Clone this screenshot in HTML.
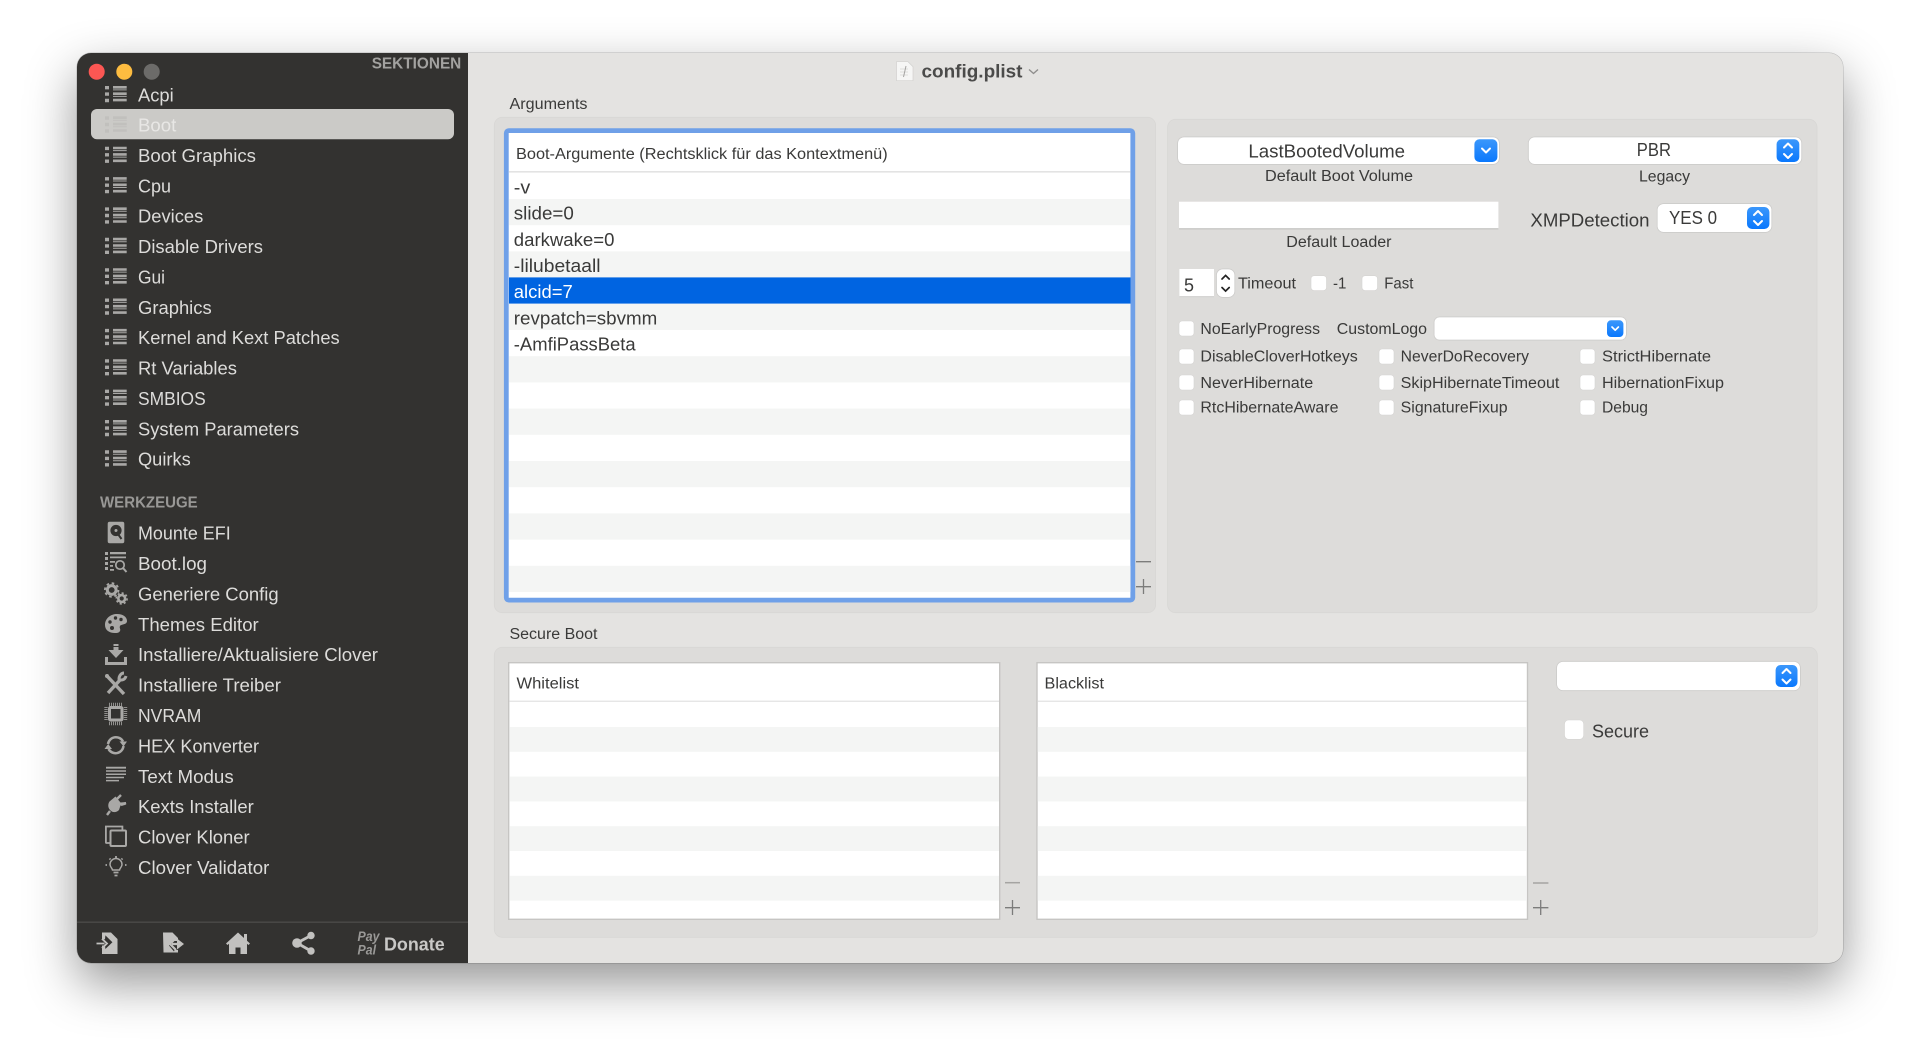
<!DOCTYPE html>
<html lang="de"><head><meta charset="utf-8"><title>config.plist</title>
<style>
html,body{margin:0;padding:0;width:1920px;height:1064px;overflow:hidden;background:#fff}
#win{position:absolute;left:77px;top:52.5px;width:1766px;height:910.5px;border-radius:14px;background:#e4e3e1;box-shadow:0 0 0 .5px rgba(0,0,0,.22),0 20px 50px rgba(0,0,0,.42);overflow:hidden}
#side{position:absolute;left:0;top:0;width:391px;height:100%;background:#333230}
svg{position:absolute;left:0;top:0;filter:blur(.3px)}
text{font-family:"Liberation Sans",sans-serif;fill:#3a3a39;font-size:15.5px}
.s text{fill:#dddcda;font-size:18.5px}
.b{filter:drop-shadow(0 .6px .5px rgba(0,0,0,.3))}
.c{fill:#fff;stroke:#d5d4d2;stroke-width:.6}
.ic{fill:#a9a8a6}
.ln{fill:none;stroke:#a9a8a6}
.g{fill:#f4f5f4}
.ch{fill:none;stroke:#fff;stroke-width:2;stroke-linecap:round;stroke-linejoin:round}
.pm{stroke:#7c7c7b;stroke-width:1.3;fill:none}
</style></head><body>
<div id="win"><div id="side"></div></div>
<svg width="1920" height="1064" viewBox="0 0 1920 1064" xmlns="http://www.w3.org/2000/svg">
<defs>
<linearGradient id="bl" x1="0" y1="0" x2="0" y2="1"><stop offset="0" stop-color="#3b97fb"/><stop offset="1" stop-color="#0a78fd"/></linearGradient>
<g id="li"><path class="ic" d="M0 0h4v3.4H0zM0 6.4h4v3.4H0zM0 12.8h4v3.4H0zM8 0h13.7v2.6H8zM8 3.4h13.7v1H8zM8 6.4h13.7v2.6H8zM8 9.9h13.7v1H8zM8 12.8h13.7v2.6H8z"/></g>
</defs>

<!-- traffic lights -->
<circle cx="96.7" cy="71.7" r="8" fill="#fc5753"/><circle cx="124.3" cy="71.7" r="8" fill="#fdbc40"/><circle cx="151.7" cy="71.7" r="8" fill="#6c6b69"/>

<g class="s" transform="translate(0,-.4)">
<text x="371.7" y="69" textLength="89.6" lengthAdjust="spacingAndGlyphs" style="font-size:15.5px;fill:#a3a2a0;font-weight:700">SEKTIONEN</text>
<rect x="91" y="109.4" width="363" height="30.3" rx="6" fill="#cbcac7"/>
<use href="#li" x="105" y="86.4"/><text x="138" y="101.7" textLength="35.7" lengthAdjust="spacingAndGlyphs">Acpi</text>
<use href="#li" x="105" y="116.8" opacity=".28"/><text x="138" y="132" textLength="38.3" lengthAdjust="spacingAndGlyphs" style="fill:#e8e7e5">Boot</text>
<use href="#li" x="105" y="147.1"/><text x="138" y="162.4" textLength="118" lengthAdjust="spacingAndGlyphs">Boot Graphics</text>
<use href="#li" x="105" y="177.5"/><text x="138" y="192.8" textLength="33" lengthAdjust="spacingAndGlyphs">Cpu</text>
<use href="#li" x="105" y="207.8"/><text x="138" y="223.1" textLength="65.3" lengthAdjust="spacingAndGlyphs">Devices</text>
<use href="#li" x="105" y="238.2"/><text x="138" y="253.5" textLength="125" lengthAdjust="spacingAndGlyphs">Disable Drivers</text>
<use href="#li" x="105" y="268.6"/><text x="138" y="283.9" textLength="27" lengthAdjust="spacingAndGlyphs">Gui</text>
<use href="#li" x="105" y="298.9"/><text x="138" y="314.2" textLength="73.7" lengthAdjust="spacingAndGlyphs">Graphics</text>
<use href="#li" x="105" y="329.3"/><text x="138" y="344.6" textLength="201.7" lengthAdjust="spacingAndGlyphs">Kernel and Kext Patches</text>
<use href="#li" x="105" y="359.6"/><text x="138" y="375" textLength="99" lengthAdjust="spacingAndGlyphs">Rt Variables</text>
<use href="#li" x="105" y="390"/><text x="138" y="405.3" textLength="67.7" lengthAdjust="spacingAndGlyphs">SMBIOS</text>
<use href="#li" x="105" y="420.4"/><text x="138" y="435.7" textLength="161" lengthAdjust="spacingAndGlyphs">System Parameters</text>
<use href="#li" x="105" y="450.7"/><text x="138" y="466" textLength="52.7" lengthAdjust="spacingAndGlyphs">Quirks</text>
<text x="100" y="507.8" textLength="97.7" lengthAdjust="spacingAndGlyphs" style="font-size:15.5px;fill:#999896;font-weight:700">WERKZEUGE</text>

<text x="138" y="540" textLength="92.7" lengthAdjust="spacingAndGlyphs">Mounte EFI</text>
<text x="138" y="570.4" textLength="69" lengthAdjust="spacingAndGlyphs">Boot.log</text>
<text x="138" y="600.8" textLength="140.7" lengthAdjust="spacingAndGlyphs">Generiere Config</text>
<text x="138" y="631.2" textLength="120.7" lengthAdjust="spacingAndGlyphs">Themes Editor</text>
<text x="138" y="661.6" textLength="240" lengthAdjust="spacingAndGlyphs">Installiere/Aktualisiere Clover</text>
<text x="138" y="692" textLength="143" lengthAdjust="spacingAndGlyphs">Installiere Treiber</text>
<text x="138" y="722.4" textLength="63.3" lengthAdjust="spacingAndGlyphs">NVRAM</text>
<text x="138" y="752.8" textLength="121" lengthAdjust="spacingAndGlyphs">HEX Konverter</text>
<text x="138" y="783.2" textLength="95.7" lengthAdjust="spacingAndGlyphs">Text Modus</text>
<text x="138" y="813.6" textLength="115.7" lengthAdjust="spacingAndGlyphs">Kexts Installer</text>
<text x="138" y="844" textLength="111.7" lengthAdjust="spacingAndGlyphs">Clover Kloner</text>
<text x="138" y="874.4" textLength="131.3" lengthAdjust="spacingAndGlyphs">Clover Validator</text>
</g>

<!-- tool icons -->
<rect x="107.7" y="521.7" width="16.6" height="21.6" rx="2" class="ic"/>
<circle cx="116" cy="530.5" r="5.6" fill="#333230"/><circle cx="116" cy="530.5" r="1.5" class="ic"/><path d="M116.5 532l5 7" stroke="#333230" stroke-width="2" fill="none"/>

<path class="ic" d="M105 552h3v3h-3zM105 557h3v3h-3zM105 562h3v3h-3zM105 567h3v3h-3zM110 552h16v2.2h-16zM110 556.5h16v1.8h-16zM110 561h5v1.8h-5zM110 565h3v1.8h-3zM110 569h4v1.8h-4z"/>
<circle cx="120" cy="565" r="4.2" class="ln" stroke-width="1.7"/><path class="ln" stroke-width="2" d="M123 568l3.5 4"/>

<circle cx="111.7" cy="590" r="4.4" class="ln" stroke-width="3"/><circle cx="111.7" cy="590" r="6.8" fill="none" stroke="#a9a8a6" stroke-width="1.8" stroke-dasharray="2.6 2.7"/>
<circle cx="121.7" cy="598.5" r="3.4" class="ln" stroke-width="2.6"/><circle cx="121.7" cy="598.5" r="5.4" fill="none" stroke="#a9a8a6" stroke-width="1.6" stroke-dasharray="2.1 2.1"/>

<path class="ic" d="M105 625c0-7 6-11 12-11 6 0 10 3 10 7 0 4-6 3-7 5-1 2 1 3 0 5-1 2-3 2-5 2-6 0-10-3-10-8z"/>
<circle cx="110" cy="622" r="1.7" fill="#333230"/><circle cx="115.5" cy="618" r="1.7" fill="#333230"/><circle cx="121" cy="619.5" r="1.7" fill="#333230"/><circle cx="112" cy="628" r="2" fill="#333230"/>

<path class="ic" d="M113.5 644h5v2h-5zM113.5 647h5v3h5l-7.5 8-7.5-8h5z"/><path class="ic" d="M105 657h3v5h16v-5h3v8H105z"/>

<path class="ln" stroke-width="3.4" d="M107 676l17 18"/><path class="ln" stroke-width="3.4" d="M108 693l12-13"/>
<path class="ln" stroke-width="3" d="M126 676c-1 4-5 5-7 3 0-3 2-6 5-6"/><circle cx="107" cy="676" r="2" class="ic"/>

<rect x="109.500" y="707.500" width="12.500" height="12.500" rx="1" class="ln" stroke-width="3"/>
<path fill="none" stroke="#a9a8a6" stroke-width="3.400" stroke-dasharray="1 1" d="M106 707v14M125.500 707v14M109 704.500h14M109 723.500h14" opacity=".8"/>

<path class="ln" stroke-width="2.500" d="M108 744A8 8 0 0 1 123 741.500M123.500 746A8 8 0 0 1 108.500 749"/>
<path class="ic" d="M119.500 741.500h7.500l-3.500 5zM104.500 749h7.500l-3.800-5z"/>

<path class="ic" d="M106 766.700h20v1.900h-20zM106 770.300h20v1.500h-20zM106 773.500h20v1.500h-20zM106 776.700h18v1.500h-18zM106 779.900h13v1.500h-13z" />

<path class="ic" d="M109.500 801.500l6-5 5 6-.0 0 5.500-.5-.5 3-5 .5-1.500 4.500c-3 3-6.500 2.500-8.500.5-2.500-2.500-3-6-1-9z"/>
<path class="ln" stroke-width="2.400" d="M116 800l5-5M107 815l3-4M121 805l5-2"/>

<path class="ln" stroke-width="1.800" d="M110 843h-3.500a.6.6 0 0 1-.6-.6V826.500h16.500v3.500"/>
<rect x="110.500" y="830.500" width="15.500" height="15.500" rx="1" class="ln" stroke-width="2"/>

<path class="ln" stroke-width="1.500" d="M112.500 870c-.3-2-2.500-3-2.500-5.500a6 6 0 0 1 12 0c0 2.500-2.200 3.500-2.500 5.500z"/>
<path class="ln" stroke-width="1.800" d="M113.500 872.500h5M114.500 875.500h3M116 856v2M107 865h-1.500M126.500 865H125M109.500 858.500l1 1M122.500 858.500l-1 1"/>

<!-- footer -->
<rect x="77" y="921.500" width="391" height="1.400" fill="#4b4a48"/>
<path style="fill:#c2c1bf" d="M102 932.500h9l6.500 6.500v15h-15.500v-8.500h3l.4 3.500 7-6.800-7-6.800-.4 3.800h-3z"/>
<path d="M96.500 943.500h8M102 938.800l5 4.700-5 4.700" fill="none" stroke="#c2c1bf" stroke-width="1.800"/>
<path style="fill:#c2c1bf" d="M163 932.500h9.500l5.500 5.500v3h-3.500l-.5-1.500-5 6 5 6 .5-1.500h3.500v2.500h-14.500z"/>
<path fill="none" stroke="#c2c1bf" stroke-width="2.200" d="M176 938l-6 6 6 6M172 944h6"/><path style="fill:#c2c1bf" d="M177 938.500l7 5.500-7 5.500z"/>
<path style="fill:#c2c1bf" d="M238 932.500l6 5.500v-4h3v6.800l3 2.700-1.500 1.500-1.500-1.200v10.200h-6.500v-6.500h-5v6.500h-6.500v-10.200l-1.500 1.200-1.500-1.500z"/>
<circle cx="297" cy="943" r="4.800" fill="#c2c1bf"/><circle cx="311" cy="935.500" r="3.700" fill="#c2c1bf"/><circle cx="311" cy="951" r="3.700" fill="#c2c1bf"/>
<path d="M297 943l14-7.500M297 943l14 8" stroke="#c2c1bf" stroke-width="2.800" fill="none"/>
<text x="357.500" y="941" textLength="22" lengthAdjust="spacingAndGlyphs" style="font-size:13.500px;font-style:italic;font-weight:700;fill:#9a9997">Pay</text>
<text x="357.500" y="954.500" textLength="18.500" lengthAdjust="spacingAndGlyphs" style="font-size:13.500px;font-style:italic;font-weight:700;fill:#9a9997">Pal</text>
<text x="384" y="950.700" textLength="60.700" lengthAdjust="spacingAndGlyphs" style="font-size:18px;font-weight:700;fill:#c9c8c6">Donate</text>

<!-- title -->
<path d="M896.500 61.700h11.500l5 5v14h-16.500z" fill="#f6f6f5" stroke="#d2d1cf" stroke-width=".7"/>
<path d="M900 69h8M900 72h8M900 75h8" stroke="#d6d5d3" stroke-width=".7" fill="none"/><path d="M906 66l-2.500 11" stroke="#a5a4a2" stroke-width="1" fill="none"/>
<text x="921.500" y="77.300" textLength="101" lengthAdjust="spacingAndGlyphs" style="font-size:18px;font-weight:700;fill:#4b4b4a">config.plist</text>
<path d="M1029 69.500l4.500 4 4.500-4" fill="none" stroke="#8f8e8d" stroke-width="1.400"/>

<!-- Arguments -->
<text x="509.500" y="109" textLength="78" lengthAdjust="spacingAndGlyphs">Arguments</text>
<rect x="494.300" y="117.300" width="661.300" height="495.400" rx="8" fill="#dddcda" stroke="#d8d7d5" stroke-width=".8"/>
<rect x="506.300" y="130.600" width="626.500" height="469.500" rx="2.500" fill="#fff" stroke="#6fa0e8" stroke-width="4.800"/>
<rect x="509" y="171" width="621.500" height="1.600" fill="#e3e3e3"/>
<text x="516" y="158.800" textLength="371.700" lengthAdjust="spacingAndGlyphs">Boot-Argumente (Rechtsklick für das Kontextmenü)</text>
<g>
<rect class="g" x="509" y="199" width="621.500" height="26.200"/><rect class="g" x="509" y="251.400" width="621.500" height="26.200"/>
<rect class="g" x="509" y="303.800" width="621.500" height="26.200"/><rect class="g" x="509" y="356.200" width="621.500" height="26.200"/>
<rect class="g" x="509" y="408.600" width="621.500" height="26.200"/><rect class="g" x="509" y="461" width="621.500" height="26.200"/>
<rect class="g" x="509" y="513.400" width="621.500" height="26.200"/><rect class="g" x="509" y="565.800" width="621.500" height="26.200"/>
<rect x="509" y="277.400" width="621.500" height="26.200" fill="#0064e1"/>
</g>
<g>
<text x="513.800" y="193.300" textLength="16.500" lengthAdjust="spacingAndGlyphs" style="font-size:18.500px">-v</text>
<text x="513.800" y="219.700" textLength="60" lengthAdjust="spacingAndGlyphs" style="font-size:18.500px">slide=0</text>
<text x="513.800" y="245.800" textLength="100.600" lengthAdjust="spacingAndGlyphs" style="font-size:18.500px">darkwake=0</text>
<text x="513.800" y="271.800" textLength="86.700" lengthAdjust="spacingAndGlyphs" style="font-size:18.500px">-lilubetaall</text>
<text x="513.800" y="298" textLength="59" lengthAdjust="spacingAndGlyphs" style="font-size:18.500px;fill:#fff">alcid=7</text>
<text x="513.800" y="324.300" textLength="143.500" lengthAdjust="spacingAndGlyphs" style="font-size:18.500px">revpatch=sbvmm</text>
<text x="513.800" y="350.700" textLength="121.900" lengthAdjust="spacingAndGlyphs" style="font-size:18.500px">-AmfiPassBeta</text>
</g>
<path class="pm" d="M1136 561.700h15M1136 586.700h15M1143.500 579v15"/>

<!-- right panel -->
<rect x="1167.600" y="119.300" width="649.400" height="493.400" rx="8" fill="#dddcda" stroke="#d8d7d5" stroke-width=".8"/>
<rect class="b" x="1178" y="137.300" width="321" height="26.700" rx="6" fill="#fff"/>
<rect x="1474.400" y="139.300" width="23" height="22.700" rx="5" fill="url(#bl)"/>
<path class="ch" d="M1482 148.500l4 4 4-4"/>
<text x="1248.400" y="157.700" textLength="156.600" lengthAdjust="spacingAndGlyphs" style="font-size:18px">LastBootedVolume</text>
<text x="1265" y="181" textLength="148" lengthAdjust="spacingAndGlyphs">Default Boot Volume</text>

<rect class="b" x="1528.700" y="137.300" width="272.700" height="26.700" rx="6" fill="#fff"/>
<rect x="1776.600" y="139.300" width="22.700" height="22.700" rx="5" fill="url(#bl)"/>
<path class="ch" d="M1784 147.500l4-4 4 4M1784 154l4 4 4-4"/>
<text x="1636.800" y="156" textLength="34.200" lengthAdjust="spacingAndGlyphs" style="font-size:18px">PBR</text>
<text x="1639" y="181.500" textLength="51" lengthAdjust="spacingAndGlyphs">Legacy</text>

<rect x="1179" y="201.700" width="319.400" height="27" fill="#fff"/><rect x="1179" y="228.300" width="319.400" height="1" fill="#b9b8b6"/>
<text x="1286.300" y="247" textLength="105.200" lengthAdjust="spacingAndGlyphs">Default Loader</text>

<text x="1530.400" y="226.700" textLength="119.100" lengthAdjust="spacingAndGlyphs" style="font-size:18.500px">XMPDetection</text>
<rect class="b" x="1657.500" y="204" width="114" height="28" rx="6" fill="#fff"/>
<rect x="1747" y="207" width="22.400" height="22" rx="5" fill="url(#bl)"/>
<path class="ch" d="M1754 215l4-4 4 4M1754 221l4 4 4-4"/>
<text x="1669" y="224" textLength="48" lengthAdjust="spacingAndGlyphs" style="font-size:18px">YES 0</text>

<rect x="1179.400" y="269" width="34.600" height="28" fill="#fff"/><rect x="1179.400" y="296.300" width="34.600" height=".8" fill="#c4c3c1"/>
<text x="1184" y="291.300" textLength="10" lengthAdjust="spacingAndGlyphs" style="font-size:18px">5</text>
<rect class="b" x="1216.800" y="269.300" width="17.700" height="27.700" rx="6" fill="#fff"/>
<path d="M1222 279l3.600-3.600 3.600 3.600M1222 287.500l3.600 3.600 3.600-3.600" fill="none" stroke="#222" stroke-width="1.700" stroke-linecap="round"/>
<text x="1238" y="288.700" textLength="58" lengthAdjust="spacingAndGlyphs" style="font-size:16px">Timeout</text>
<rect class="c" x="1311" y="275.700" width="15.500" height="14.800" rx="3"/>
<text x="1333" y="288.700" textLength="13.400" lengthAdjust="spacingAndGlyphs" style="font-size:16px">-1</text>
<rect class="c" x="1362" y="275.700" width="15.500" height="14.800" rx="3"/>
<text x="1384.300" y="288.700" textLength="29.100" lengthAdjust="spacingAndGlyphs" style="font-size:16px">Fast</text>

<rect class="c" x="1179" y="321" width="15" height="15" rx="3"/>
<text x="1200.400" y="334" textLength="119.600" lengthAdjust="spacingAndGlyphs">NoEarlyProgress</text>
<text x="1336.800" y="334" textLength="90.200" lengthAdjust="spacingAndGlyphs">CustomLogo</text>
<rect class="b" x="1434.400" y="317.300" width="191.600" height="22.400" rx="5" fill="#fff"/>
<rect x="1607" y="320.300" width="16.400" height="16.700" rx="4" fill="url(#bl)"/>
<path class="ch" style="stroke-width:1.700" d="M1612 327l3.200 3.200 3.200-3.200"/>

<rect class="c" x="1179" y="349" width="15" height="15" rx="3"/><text x="1200.400" y="361.700" textLength="157.400" lengthAdjust="spacingAndGlyphs">DisableCloverHotkeys</text>
<rect class="c" x="1379" y="349" width="15" height="15" rx="3"/><text x="1400.700" y="361.700" textLength="128.300" lengthAdjust="spacingAndGlyphs">NeverDoRecovery</text>
<rect class="c" x="1580" y="349" width="15" height="15" rx="3"/><text x="1602" y="361.700" textLength="109" lengthAdjust="spacingAndGlyphs">StrictHibernate</text>
<rect class="c" x="1179" y="375" width="15" height="15" rx="3"/><text x="1200.400" y="388" textLength="112.800" lengthAdjust="spacingAndGlyphs">NeverHibernate</text>
<rect class="c" x="1379" y="375" width="15" height="15" rx="3"/><text x="1400.700" y="388" textLength="158.700" lengthAdjust="spacingAndGlyphs">SkipHibernateTimeout</text>
<rect class="c" x="1580" y="375" width="15" height="15" rx="3"/><text x="1602" y="388" textLength="122" lengthAdjust="spacingAndGlyphs">HibernationFixup</text>
<rect class="c" x="1179" y="400" width="15" height="15" rx="3"/><text x="1200.400" y="412.700" textLength="138.100" lengthAdjust="spacingAndGlyphs">RtcHibernateAware</text>
<rect class="c" x="1379" y="400" width="15" height="15" rx="3"/><text x="1400.700" y="412.700" textLength="106.900" lengthAdjust="spacingAndGlyphs">SignatureFixup</text>
<rect class="c" x="1580" y="400" width="15" height="15" rx="3"/><text x="1602" y="412.700" textLength="46" lengthAdjust="spacingAndGlyphs">Debug</text>

<!-- Secure Boot -->
<text x="509.500" y="639" textLength="88" lengthAdjust="spacingAndGlyphs">Secure Boot</text>
<rect x="494.300" y="647.300" width="1323" height="290" rx="8" fill="#dddcda" stroke="#d8d7d5" stroke-width=".8"/>

<rect x="508.700" y="662.700" width="491" height="256.600" fill="#fff" stroke="#c6c5c3" stroke-width="1.400"/>
<rect x="509.400" y="700.600" width="489.600" height="1.300" fill="#e3e3e3"/>
<rect class="g" x="509.400" y="727" width="489.600" height="24.800"/><rect class="g" x="509.400" y="776.600" width="489.600" height="24.800"/>
<rect class="g" x="509.400" y="826.200" width="489.600" height="24.800"/><rect class="g" x="509.400" y="875.800" width="489.600" height="24.800"/>
<text x="516.500" y="688.300" textLength="62.500" lengthAdjust="spacingAndGlyphs">Whitelist</text>
<path d="M1005 882.700h15" stroke="#a5a4a2" stroke-width="1.500"/><path class="pm" d="M1005 907.700h15M1012.500 900v15"/>

<rect x="1037" y="662.700" width="490.500" height="256.600" fill="#fff" stroke="#c6c5c3" stroke-width="1.400"/>
<rect x="1037.700" y="700.600" width="489.100" height="1.300" fill="#e3e3e3"/>
<rect class="g" x="1037.700" y="727" width="489.100" height="24.800"/><rect class="g" x="1037.700" y="776.600" width="489.100" height="24.800"/>
<rect class="g" x="1037.700" y="826.200" width="489.100" height="24.800"/><rect class="g" x="1037.700" y="875.800" width="489.100" height="24.800"/>
<text x="1044.500" y="688.300" textLength="59.500" lengthAdjust="spacingAndGlyphs">Blacklist</text>
<path d="M1533 883h15.400" stroke="#a5a4a2" stroke-width="1.500"/><path class="pm" d="M1533 907.700h15.400M1540.700 900v15"/>

<rect class="b" x="1557" y="661.700" width="243" height="28.600" rx="6" fill="#fff"/>
<rect x="1775.600" y="665" width="21.900" height="22" rx="5" fill="url(#bl)"/>
<path class="ch" d="M1782.500 673l4-4 4 4M1782.500 679.500l4 4 4-4"/>
<rect class="c" x="1564.500" y="720" width="19.200" height="19.300" rx="4"/>
<text x="1592" y="737.300" textLength="57" lengthAdjust="spacingAndGlyphs" style="font-size:18px">Secure</text>
</svg>
</body></html>
